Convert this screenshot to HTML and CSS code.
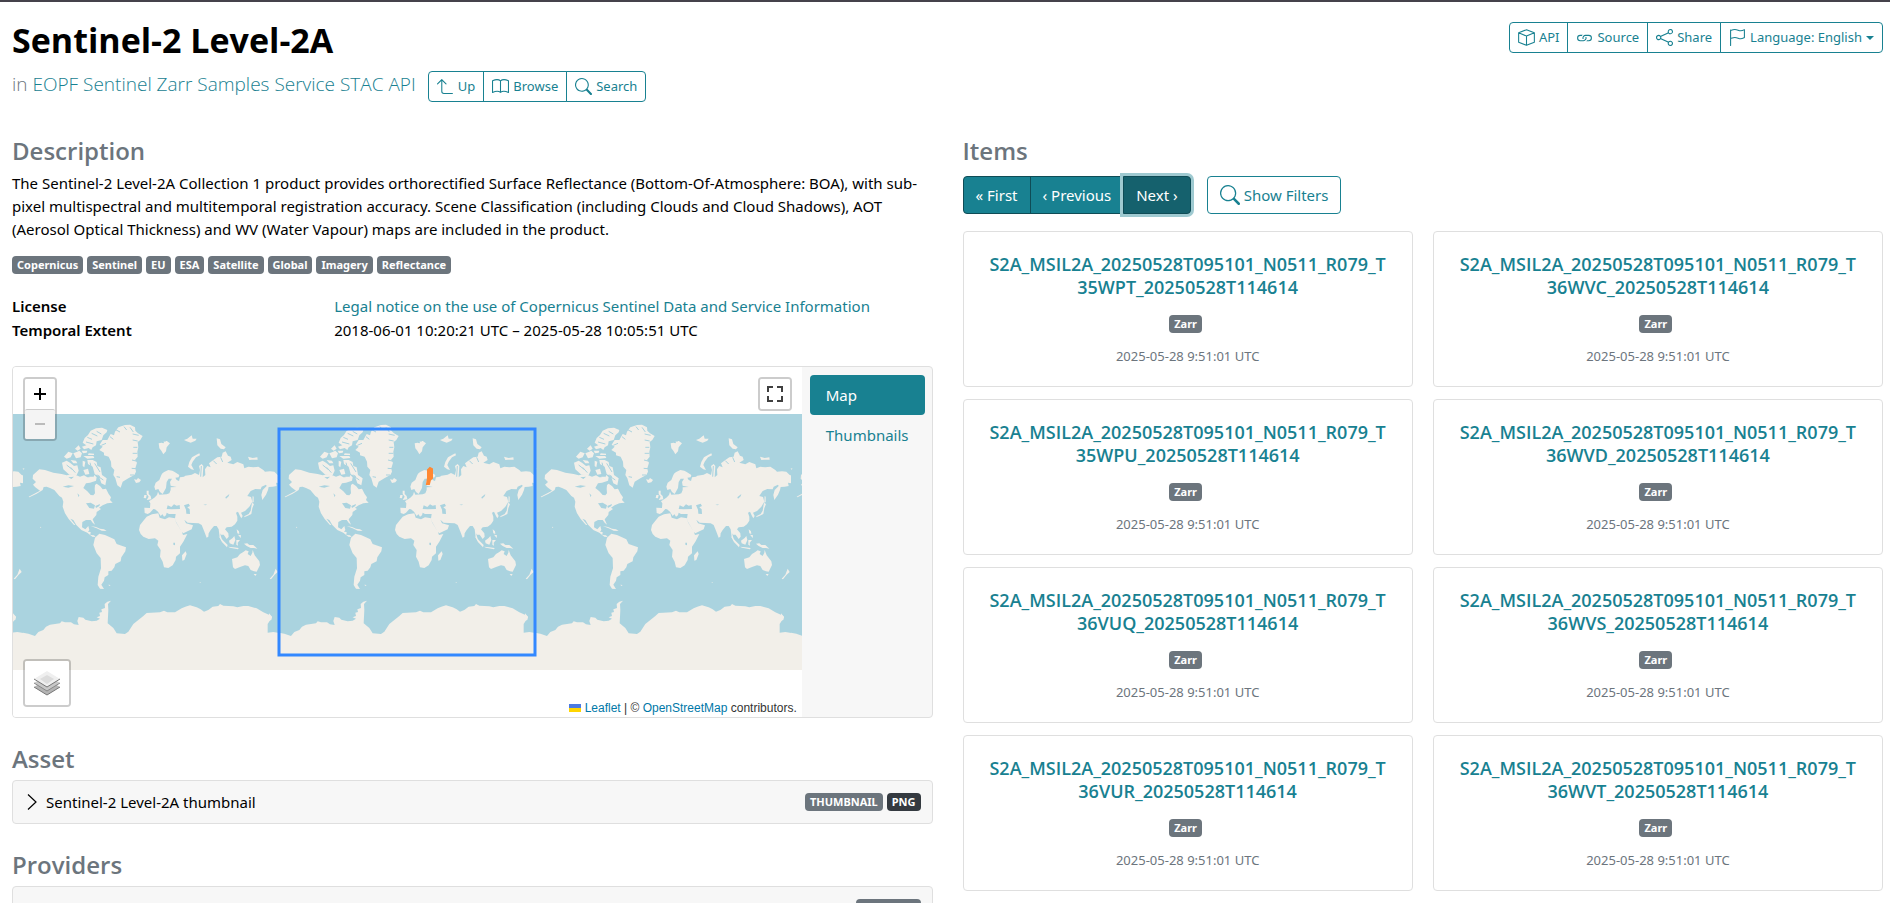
FILE: index.html
```html
<!DOCTYPE html>
<html lang="en">
<head>
<meta charset="utf-8">
<meta name="viewport" content="width=device-width, initial-scale=1">
<title>Sentinel-2 Level-2A</title>
<link rel="stylesheet" href="styles.css">
</head>
<body>
<svg class="sprite" aria-hidden="true">
  <symbol id="i-box" viewBox="0 0 16 16"><path fill="none" stroke="currentColor" stroke-linejoin="round" d="M8 .7 15.4 3.6V12.4L8 15.4.6 12.4V3.6ZM.6 3.6 8 6.6 15.4 3.6M8 6.6V15.4"/></symbol>
  <symbol id="i-link" viewBox="0 0 16 16"><path d="M6.354 5.5H4a3 3 0 0 0 0 6h3a3 3 0 0 0 2.83-4H9c-.086 0-.17.01-.25.031A2 2 0 0 1 7 10.5H4a2 2 0 1 1 0-4h1.535c.218-.376.495-.714.82-1z"/><path d="M9 5.5a3 3 0 0 0-2.83 4h1.098A2 2 0 0 1 9 6.5h3a2 2 0 1 1 0 4h-1.535a4.02 4.02 0 0 1-.82 1H12a3 3 0 1 0 0-6H9z"/></symbol>
  <symbol id="i-share" viewBox="0 0 16 16"><path d="M13.5 1a1.5 1.5 0 1 0 0 3 1.5 1.5 0 0 0 0-3zM11 2.5a2.5 2.5 0 1 1 .603 1.628l-6.718 3.12a2.499 2.499 0 0 1 0 1.504l6.718 3.12a2.5 2.5 0 1 1-.488.876l-6.718-3.12a2.5 2.5 0 1 1 0-3.256l6.718-3.12A2.5 2.5 0 0 1 11 2.5zm-8.5 4a1.5 1.5 0 1 0 0 3 1.5 1.5 0 0 0 0-3zm11 5.5a1.5 1.5 0 1 0 0 3 1.5 1.5 0 0 0 0-3z"/></symbol>
  <symbol id="i-flag" viewBox="0 0 16 16"><path fill="none" stroke="currentColor" stroke-linecap="round" stroke-linejoin="round" d="M1.5 15.5V1M1.5 1.5C3 .9 4.300 .5 5.500 .5 8 .5 9 1.700 11 1.700c1.400 0 2.600-.6 3.500-1.100V8c-1 .5-2.200 1.200-3.500 1.200C9 9.200 8 8 5.500 8 4.300 8 3 8.500 1.500 9"/></symbol>
  <symbol id="i-up" viewBox="0 0 16 16"><path d="M4.854 1.146a.5.5 0 0 0-.708 0l-4 4a.5.5 0 1 0 .708.708L4 2.707V12.500A2.500 2.500 0 0 0 6.500 15h8a.5.5 0 0 0 0-1h-8A1.500 1.500 0 0 1 5 12.500V2.707l3.146 3.147a.5.5 0 1 0 .708-.708l-4-4z"/></symbol>
  <symbol id="i-book" viewBox="0 0 16 16"><path fill="none" stroke="currentColor" stroke-linejoin="round" d="M8 2.800C6.500 1.300 3 1.500.5 2.500V13.600C3 12.500 6.500 12.300 8 13.600 9.500 12.300 13 12.500 15.500 13.600V2.500C13 1.500 9.500 1.300 8 2.800V13.600"/></symbol>
  <symbol id="i-search" viewBox="0 0 16 16"><path d="M11.742 10.344a6.500 6.500 0 1 0-1.397 1.398h-.001c.03.04.062.078.098.115l3.850 3.850a1 1 0 0 0 1.415-1.414l-3.850-3.850a1.007 1.007 0 0 0-.115-.1zM12 6.500a5.500 5.500 0 1 1-11 0 5.500 5.500 0 0 1 11 0z"/></symbol>
  <symbol id="world" viewBox="69 162 768 768" overflow="visible">
    <path class="sea" d="M69 162H838V930H69Z"/>
    <path class="land" d="M463 380 467 368 478 360 484 345 488 339 494 335 505 330 517 332 524 336 538 345 536 352 526 353 530 360 537 363 540 352 552 350 556 347 575 344 585 339 597 345 600 330 597 318 605 312 610 318 608 352 616 345 615 328 622 318 632 322 627 310 640 300 652 292 665 290 668 278 677 274 684 287 692 290 695 300 682 308 700 313 712 306 730 313 733 325 745 320 760 322 775 320 790 330 795 335 810 334 823 335 833 345 856 352 850 362 843 358 838 370 828 368 830 378 818 380 806 381 804 390 798 404 787 420 784 405 788 390 800 378 798 374 785 380 782 388 766 387 752 393 742 408 753 411 757 425 748 440 735 453 723 458 728 468 724 475 720 468 714 455 708 458 712 470 712 482 705 493 695 500 680 502 675 508 685 520 686 530 680 537 671 524 663 524 660 520 665 536 671 548 666 546 659 532 656 508 650 498 642 498 632 510 626 520 625 530 620 533 612 512 605 495 596 490 580 489 563 488 553 479 558 490 579 496 575 508 550 520 545 515 528 485 525 475 507 472 495 478 479 473 475 460 456 463 440 470 432 480 420 495 417 510 422 522 430 530 446 537 465 535 475 542 472 555 482 570 480 590 488 605 492 622 505 624 518 616 527 600 528 590 540 580 540 560 550 545 562 522 549 525 546 517 528 487 525 475 527 462 507 462 500 458 498 466 492 470 482 454 474 448 490 460 482 468 474 455 465 448 460 447 450 458 443 462 434 459 433 443 450 444 451 430 447 424 463 413 471 405 474 395 478 404 500 403 508 400 512 390 512 382 530 381 512 377 510 366 516 356 506 356 500 366 498 384 488 402 480 396 475 387 466 390Z"/>
    <path class="land" d="M99 345 118 328 135 330 160 338 185 342 200 346 220 342 240 350 252 346 262 352 280 352 283 345 290 352 288 362 270 368 258 370 250 384 262 394 272 405 280 406 285 400 284 386 285 375 290 371 300 378 308 388 318 386 326 402 333 412 330 420 338 428 322 430 308 436 297 443 303 447 290 456 289 465 278 478 285 494 278 488 272 480 258 480 247 486 246 502 256 508 265 498 268 510 264 515 272 516 271 525 282 526 287 531 277 530 262 518 244 510 229 495 220 480 211 476 226 495 222 495 206 477 195 460 188 440 190 425 186 413 178 408 163 390 150 384 140 380 131 381 128 390 110 401 88 412 86 410 120 392 106 382 99 374 108 366 98 356Z"/>
    <path class="land" d="M285 533 298 521 315 525 330 532 343 538 350 552 378 562 376 574 364 592 362 604 346 612 343 622 335 632 325 634 325 645 314 652 312 662 304 674 312 687 300 686 293 675 295 650 303 625 302 594 290 580 280 555Z"/>
    <path class="land" d="M299 254 308 240 322 240 332 222 342 226 345 215 355 202 375 195 390 194 405 202 406 212 414 220 428 228 421 240 413 246 415 262 412 275 413 290 405 300 411 308 406 325 408 335 403 345 385 355 368 365 362 383 352 376 346 355 340 345 343 330 334 320 333 305 326 290 312 286 312 278 298 270 308 260Z"/>
    <path class="land" d="M248 248 254 234 264 225 272 212 288 205 306 203 322 210 320 217 310 226 305 240 290 244 288 256 278 262 274 270 266 264 252 268 246 260 259 256ZM266 280 282 281 282 285 264 285ZM250 288 280 288 283 294 262 296ZM225 266 236 256 242 266 233 272ZM192 290 205 275 218 280 212 292 200 296ZM220 280 230 276 238 272 246 280 242 292 228 295ZM245 272 262 272 260 278 249 280ZM186 308 200 302 210 308 222 318 232 316 236 332 230 345 208 344 190 328ZM212 300 228 302 232 310 220 310ZM248 302 256 305 253 322 248 318ZM262 300 278 300 290 306 292 318 302 322 306 345 320 355 316 376 304 370 298 352 284 342 278 320 264 312ZM250 330 264 326 268 342 256 344ZM268 350 280 350 284 362 272 364ZM402 358 410 359 414 354 423 360 418 367 408 369ZM440 392 446 392 446 402 452 408 454 418 440 420 446 410 440 402ZM433 405 440 405 438 415 431 414ZM476 250 485 248 490 250 500 243 510 250 500 262 498 274 490 283 484 272 478 265ZM490 245 502 244 508 252 498 255ZM552 240 562 236 575 226 578 236 590 236 586 242 572 248 560 244ZM598 280 600 286 588 292 578 305 574 315 582 330 574 328 564 320 568 306 576 292 588 285ZM650 235 660 238 664 252 677 262 672 268 662 266 652 256ZM744 290 758 294 772 292 773 299 756 299 748 300ZM68 325 74 326 70 329ZM756 428 762 432 757 445 754 462 742 468 732 472 734 468 746 462 752 452ZM758 408 761 410 761 426 757 428ZM680 408 687 400 686 408 676 416Z"/>
    <path class="land" d="M656 528 668 540 683 555 681 562 668 548ZM684 560 700 562 716 564 714 568 690 563ZM687 542 698 534 703 528 706 540 700 554 689 550ZM709 540 720 540 713 548 714 557 709 554ZM710 508 717 514 718 522 712 520ZM714 524 723 526 722 534ZM732 551 742 550 748 555 760 555 772 566 762 564 752 564 740 558ZM546 586 557 574 560 582 553 600 547 602ZM696 597 712 592 720 582 730 576 737 571 746 574 743 582 752 588 757 578 758 570 764 586 778 604 780 615 770 635 762 634 752 630 745 618 735 616 722 620 705 627 699 622ZM761 642 770 642 766 648ZM827 626 833 636 824 644 813 658 809 656 820 644ZM272 498 288 501 300 506 312 508 320 513 305 512 290 505ZM325 674 332 675 328 678ZM807 760 816 770 814 780 807 782ZM120 500 124 502 121 504ZM599 666 603 667 600 669Z"/>
    <path class="land" d="M69 818 85 821 105 828 115 816 130 810 138 800 150 794 180 790 185 784 195 787 213 787 222 793 236 795 232 783 236 771 250 773 256 779 275 784 290 782 300 776 290 772 300 768 298 758 306 756 304 748 315 744 314 732 322 725 333 722 324 732 325 750 323 790 340 804 350 820 375 822 385 815 400 792 415 780 430 768 440 759 480 757 492 752 502 757 525 757 545 745 556 740 570 736 590 742 602 748 612 755 625 750 638 740 655 738 660 732 670 737 700 739 712 742 730 738 745 738 770 745 790 757 810 766 816 772 803 792 803 818 820 816 838 819V930H69Z"/>
    <path class="sea" d="M500 447 503 436 514 441 522 433 530 437 539 435 540 447 515 448ZM552 436 566 431 570 438 562 442 569 448 570 462 559 461 558 449ZM205 352 222 350 214 357ZM188 380 205 376 222 378 205 383ZM258 430 272 428 285 436 282 446 268 444ZM286 438 300 432 298 438 288 444ZM232 400 238 406 236 412ZM520 548 525 548 525 556 520 554ZM676 412 688 402 686 409 678 416ZM610 434 622 433 616 436Z"/>
    <path class="inlet" d="M345 208 360 216M372 200 380 210M390 202 400 216M398 222 416 226M398 240 413 243M400 262 412 262M398 280 412 280M396 300 408 303M395 325 408 326M390 345 402 345M350 350 360 352M318 250 304 256M330 230 340 238M262 232 276 238M275 220 292 228M258 246 280 252M290 214 304 222M200 315 216 328M212 322 226 338M270 308 276 330M284 310 300 336M288 345 310 360M238 322 244 340M292 345 300 350M604 318 602 350M640 302 650 312M662 292 668 306"/>
  </symbol>
</svg>

<header class="page-header">
  <div class="heading">
    <h1>Sentinel-2 Level-2A</h1>
    <div class="subline">
      <p class="parent">in <a href="#">EOPF Sentinel Zarr Samples Service STAC API</a></p>
      <div class="group" role="group">
        <button class="btn btn-sm" type="button"><svg class="icon"><use href="#i-up"/></svg>Up</button>
        <button class="btn btn-sm" type="button"><svg class="icon"><use href="#i-book"/></svg>Browse</button>
        <button class="btn btn-sm" type="button"><svg class="icon"><use href="#i-search"/></svg>Search</button>
      </div>
    </div>
  </div>
  <div class="group actions" role="group">
    <button class="btn btn-sm" type="button"><svg class="icon"><use href="#i-box"/></svg>API</button>
    <button class="btn btn-sm" type="button"><svg class="icon"><use href="#i-link"/></svg>Source</button>
    <button class="btn btn-sm" type="button"><svg class="icon"><use href="#i-share"/></svg>Share</button>
    <button class="btn btn-sm" type="button" aria-haspopup="menu"><svg class="icon"><use href="#i-flag"/></svg>Language: English<span class="caret"></span></button>
  </div>
</header>

<main class="columns">
  <div class="info">
    <section>
      <h2>Description</h2>
      <p class="description">The Sentinel-2 Level-2A Collection 1 product provides orthorectified Surface Reflectance (Bottom-Of-Atmosphere: BOA), with sub-pixel multispectral and multitemporal registration accuracy. Scene Classification (including Clouds and Cloud Shadows), AOT (Aerosol Optical Thickness) and WV (Water Vapour) maps are included in the product.</p>
      <div class="tags">
        <span class="badge">Copernicus</span><span class="badge">Sentinel</span><span class="badge">EU</span><span class="badge">ESA</span><span class="badge">Satellite</span><span class="badge">Global</span><span class="badge">Imagery</span><span class="badge">Reflectance</span>
      </div>
      <dl class="facts">
        <dt>License</dt><dd><a href="#">Legal notice on the use of Copernicus Sentinel Data and Service Information</a></dd>
        <dt>Temporal Extent</dt><dd>2018-06-01 10:20:21 UTC – 2025-05-28 10:05:51 UTC</dd>
      </dl>
    </section>

    <section class="viewer">
      <div class="map">
        <svg class="world" aria-label="World map">
          <use href="#world" x="-246" y="47" width="256" height="256"/>
          <use href="#world" x="10" y="47" width="256" height="256"/>
          <use href="#world" x="266" y="47" width="256" height="256"/>
          <use href="#world" x="522" y="47" width="256" height="256"/>
          <use href="#world" x="778" y="47" width="256" height="256"/>
          <rect class="extent" x="266" y="62" width="256" height="226"/>
          <path class="selection" d="M415 103 417 101 419 102V111L417 113 416 117H414L415 111Z"/>
        </svg>
        <div class="map-control zoom">
          <button type="button" aria-label="Zoom in"><svg viewBox="0 0 30 30"><path d="M9 15H21M15 9V21" stroke="#000" stroke-width="2"/></svg></button>
          <button type="button" aria-label="Zoom out" disabled><svg viewBox="0 0 30 30"><path d="M10 14H20" stroke="#bbb" stroke-width="2"/></svg></button>
        </div>
        <div class="map-control fullscreen">
          <button type="button" aria-label="Full screen"><svg viewBox="0 0 30 30"><path d="M8 13V8H13M17 8H22V13M22 17V22H17M13 22H8V17" fill="none" stroke="#404040" stroke-width="2"/></svg></button>
        </div>
        <div class="map-control layers">
          <button type="button" aria-label="Layers"><svg viewBox="0 0 26 26"><path d="M0 17 13 9 26 17 13 25Z" fill="#b4b4b4"/><path d="M0 17 13 25 26 17" fill="none" stroke="#777"/><path d="M0 13 13 5 26 13 13 21Z" fill="#c8c8c8"/><path d="M0 13 13 21 26 13" fill="none" stroke="#888"/><path d="M0 9 13 1 26 9 13 17Z" fill="#efefef"/><path d="M6 9 13 5 20 9 13 14Z" fill="#dcdcdc"/><path d="M0 9 13 17 26 9" fill="none" stroke="#777"/></svg></button>
        </div>
        <p class="attribution"><a href="#"><svg class="ua" viewBox="0 0 12 8"><path fill="#4C7BE1" d="M0 0h12v4H0z"/><path fill="#FFD500" d="M0 4h12v4H0z"/></svg> Leaflet</a> | © <a href="#">OpenStreetMap</a> contributors.</p>
      </div>
      <nav class="tabs">
        <a class="tab active" href="#">Map</a>
        <a class="tab" href="#">Thumbnails</a>
      </nav>
    </section>

    <section>
      <h2>Asset</h2>
      <button class="panel" type="button">
        <svg class="chevron" viewBox="0 0 16 16"><path d="M4 .5 12 8 4 15.500" fill="none" stroke="currentColor" stroke-width="1.200"/></svg>
        <span class="panel-title">Sentinel-2 Level-2A thumbnail</span>
        <span class="badge">THUMBNAIL</span><span class="badge dark">PNG</span>
      </button>
    </section>

    <section>
      <h2>Providers</h2>
      <div class="panel">
        <a class="panel-title" href="#">Copernicus Sentinel</a>
        <span class="badge">LICENSOR</span>
      </div>
    </section>
  </div>

  <section class="items">
    <h2>Items</h2>
    <div class="toolbar">
      <div class="group" role="group">
        <button class="btn solid" type="button">« First</button>
        <button class="btn solid" type="button">‹ Previous</button>
        <button class="btn solid current" type="button">Next ›</button>
      </div>
      <button class="btn" type="button"><svg class="icon large"><use href="#i-search"/></svg>Show Filters</button>
    </div>
    <div class="cards">
      <article class="card"><h3><a href="#">S2A_MSIL2A_20250528T095101_N0511_R079_T<wbr>35WPT_20250528T114614</a></h3><span class="badge">Zarr</span><time>2025-05-28 9:51:01 UTC</time></article>
      <article class="card"><h3><a href="#">S2A_MSIL2A_20250528T095101_N0511_R079_T<wbr>36WVC_20250528T114614</a></h3><span class="badge">Zarr</span><time>2025-05-28 9:51:01 UTC</time></article>
      <article class="card"><h3><a href="#">S2A_MSIL2A_20250528T095101_N0511_R079_T<wbr>35WPU_20250528T114614</a></h3><span class="badge">Zarr</span><time>2025-05-28 9:51:01 UTC</time></article>
      <article class="card"><h3><a href="#">S2A_MSIL2A_20250528T095101_N0511_R079_T<wbr>36WVD_20250528T114614</a></h3><span class="badge">Zarr</span><time>2025-05-28 9:51:01 UTC</time></article>
      <article class="card"><h3><a href="#">S2A_MSIL2A_20250528T095101_N0511_R079_T<wbr>36VUQ_20250528T114614</a></h3><span class="badge">Zarr</span><time>2025-05-28 9:51:01 UTC</time></article>
      <article class="card"><h3><a href="#">S2A_MSIL2A_20250528T095101_N0511_R079_T<wbr>36WVS_20250528T114614</a></h3><span class="badge">Zarr</span><time>2025-05-28 9:51:01 UTC</time></article>
      <article class="card"><h3><a href="#">S2A_MSIL2A_20250528T095101_N0511_R079_T<wbr>36VUR_20250528T114614</a></h3><span class="badge">Zarr</span><time>2025-05-28 9:51:01 UTC</time></article>
      <article class="card"><h3><a href="#">S2A_MSIL2A_20250528T095101_N0511_R079_T<wbr>36WVT_20250528T114614</a></h3><span class="badge">Zarr</span><time>2025-05-28 9:51:01 UTC</time></article>
    </div>
  </section>
</main>
</body>
</html>
```
FILE: styles.css
```css
:root {
  --teal: #188191;
  --teal-dark: #15616d;
  --teal-line: #0f4c56;
  --gray: #6c757d;
  --line: #dfdfdf;
  --panel: #f7f7f7;
  --heading-font: "Open Sans", "Noto Sans", sans-serif;
}

* { box-sizing: border-box; }

body {
  margin: 0;
  padding: 20px 7px 0 12px;
  border-top: 2px solid #45424b;
  background: #fff;
  color: #000;
  font-family: "Noto Sans", "Open Sans", sans-serif;
  font-size: 15px;
  line-height: 23px;
}

h1, h2, h3, p, dl, dd { margin: 0; }
h1, h2, h3, .parent { font-family: var(--heading-font); }
a { color: var(--teal); text-decoration: none; }
button { font: inherit; cursor: pointer; }
.sprite { position: absolute; width: 0; height: 0; }

.page-header {
  display: flex;
  justify-content: space-between;
  align-items: flex-start;
}

h1 {
  font-size: 34px;
  line-height: 36px;
  font-weight: 700;
}

.subline {
  display: flex;
  align-items: flex-start;
  gap: 12px;
  margin-top: 13px;
}

.parent {
  color: var(--gray);
  font-size: 19px;
  line-height: 26px;
  font-weight: 300;
}

.group { display: flex; }
.group .btn { border-radius: 0; }
.group .btn + .btn { margin-left: -1px; }
.group .btn:first-child { border-radius: 4px 0 0 4px; }
.group .btn:last-child { border-radius: 0 4px 4px 0; }

.btn {
  display: inline-flex;
  align-items: center;
  gap: 4px;
  height: 38px;
  padding: 0 12px;
  border: 1px solid var(--teal);
  border-radius: 4px;
  background: #fff;
  color: var(--teal);
  font-size: 15px;
  white-space: nowrap;
}

.btn-sm {
  height: 31px;
  padding: 0 8px;
  font-size: 13px;
}

.btn.solid {
  border-color: var(--teal-line);
  background: var(--teal);
  color: #fff;
}

.btn.solid.current {
  z-index: 1;
  background: var(--teal-dark);
  box-shadow: 0 0 0 3px #9fcad1;
}

.icon {
  width: 17px;
  height: 17px;
  fill: currentColor;
}

.icon.large { width: 20px; height: 20px; }

.caret {
  border-top: 4px solid currentColor;
  border-right: 4px solid transparent;
  border-left: 4px solid transparent;
}

.columns {
  display: grid;
  grid-template-columns: minmax(0, 1fr) minmax(0, 1fr);
  gap: 30px;
  margin-top: 34px;
}

h2 {
  margin-bottom: 6px;
  color: var(--gray);
  font-size: 24px;
  line-height: 30px;
  font-weight: 600;
}

.tags {
  display: flex;
  flex-wrap: wrap;
  gap: 4px;
  margin-top: 15px;
}

.badge {
  padding: 0 5px;
  border-radius: 4px;
  background: var(--gray);
  color: #fff;
  font-size: 11px;
  line-height: 18px;
  font-weight: 700;
}

.badge.dark { background: #343a40; }

.facts {
  display: grid;
  grid-template-columns: 35% minmax(0, 1fr);
  row-gap: 1px;
  margin-top: 21px;
}

.facts dt { font-weight: 600; }

.viewer {
  display: flex;
  height: 352px;
  margin: 24px 0 26px;
  border: 1px solid var(--line);
  border-radius: 4px;
  background: var(--panel);
  overflow: hidden;
}

.map {
  position: relative;
  flex: 1;
  min-width: 0;
  background: #fff;
}

.world {
  display: block;
  width: 100%;
  height: 100%;
}

.sea { fill: #aad3df; }
.land { fill: #f2efe9; }
.inlet { fill: none; stroke: #aad3df; stroke-width: 3; }
.extent { fill: none; stroke: #3388ff; stroke-width: 3; }
.selection { fill: #ff8833; stroke: #ff8833; stroke-width: 2; }

.map-control {
  position: absolute;
  border: 2px solid rgba(0, 0, 0, 0.2);
  border-radius: 4px;
  background: #fff;
  background-clip: padding-box;
}

.map-control button {
  display: block;
  width: 30px;
  height: 30px;
  padding: 0;
  border: 0;
  border-radius: 2px;
  background: #fff;
}

.map-control button + button { border-top: 1px solid #ccc; }
.map-control button:disabled { background: #f4f4f4; }
.map-control svg { display: block; width: 100%; }
.zoom { top: 10px; left: 10px; }
.fullscreen { top: 10px; right: 10px; }
.layers { bottom: 10px; left: 10px; }
.layers button { width: 44px; height: 44px; padding: 9px; }

.attribution {
  position: absolute;
  right: 0;
  bottom: 0;
  padding: 0 5px;
  color: #333;
  font-family: "Liberation Sans", Arial, sans-serif;
  font-size: 12px;
  line-height: 18px;
}

.attribution a { color: #0078a8; }
.ua { width: 12px; height: 8px; }

.tabs { flex: 0 0 129px; padding: 8px 7px 8px 8px; }

.tab {
  display: block;
  padding: 8px 16px;
  border-radius: 4px;
  line-height: 24px;
}

.tab.active { background: var(--teal); color: #fff; }

.panel {
  display: flex;
  align-items: center;
  gap: 4px;
  width: 100%;
  height: 44px;
  margin-bottom: 26px;
  padding: 0 11px;
  border: 1px solid var(--line);
  border-radius: 4px;
  background: var(--panel);
  color: #000;
  text-align: left;
}

.panel-title { flex: 1; margin-left: 2px; }
.chevron { width: 16px; height: 16px; }

.toolbar { display: flex; gap: 16px; margin-top: 10px; }

.cards {
  display: grid;
  grid-template-columns: repeat(2, minmax(0, 1fr));
  gap: 12px 20px;
  margin-top: 17px;
}

.card {
  display: flex;
  flex-direction: column;
  align-items: center;
  padding: 21px 20px 19px;
  border: 1px solid var(--line);
  border-radius: 4px;
  text-align: center;
}

.card h3 {
  margin-bottom: 16px;
  font-size: 18px;
  line-height: 23px;
  font-weight: 600;
}

.card .badge { margin-right: 4px; }

.card time {
  margin-top: 12px;
  color: var(--gray);
  font-size: 13px;
  line-height: 22px;
}
```
